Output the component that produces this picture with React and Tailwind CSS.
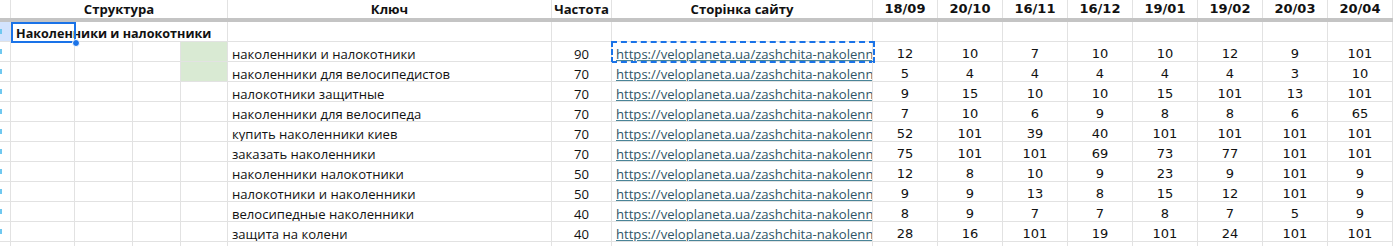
import React from 'react'

const dates = ['18/09', '20/10', '16/11', '16/12', '19/01', '19/02', '20/03', '20/04']

const rows = [
  ['наколенники и налокотники', 90, [12, 10, 7, 10, 10, 12, 9, 101]],
  ['наколенники для велосипедистов', 70, [5, 4, 4, 4, 4, 4, 3, 10]],
  ['налокотники защитные', 70, [9, 15, 10, 10, 15, 101, 13, 101]],
  ['наколенники для велосипеда', 70, [7, 10, 6, 9, 8, 8, 6, 65]],
  ['купить наколенники киев', 70, [52, 101, 39, 40, 101, 101, 101, 101]],
  ['заказать наколенники', 70, [75, 101, 101, 69, 73, 77, 101, 101]],
  ['наколенники налокотники', 50, [12, 8, 10, 9, 23, 9, 101, 9]],
  ['налокотники и наколенники', 50, [9, 9, 13, 8, 15, 12, 101, 9]],
  ['велосипедные наколенники', 40, [8, 9, 7, 7, 8, 7, 5, 9]],
  ['защита на колени', 40, [28, 16, 101, 19, 101, 24, 101, 101]],
]

const url = 'https://veloplaneta.ua/zashchita-nakolenn'

const grid =
  'grid grid-cols-[11px_64px_58px_48px_47px_324px_60px_261px_repeat(8,65px)]'
const cell = 'border-r border-b border-[#e2e2e2] h-5 overflow-hidden whitespace-nowrap'
const txt = 'pt-1 leading-4'
const rounded = { fontFamily: '"Open Sans", "Noto Sans", sans-serif' }
const verdana = { fontFamily: '"DejaVu Sans", Verdana, sans-serif' }

const RowHead = ({ active }) => (
  <div className={`${cell} relative ${active ? 'bg-[#d3e3fd]' : 'bg-white'}`}>
    <span className="absolute left-0 top-[7px] w-[2px] h-[5px] bg-[#6fc8f0]" />
  </div>
)

const App = () => {
  return (
    <div className="w-[1393px] h-[246px] overflow-hidden bg-white text-[13.1px] text-[#111]" style={rounded}>
      {/* header */}
      <div className={`${grid} h-[18px]`}>
        <div className="border-r border-[#e2e2e2]" />
        <div className="col-span-4 border-r border-[#e2e2e2] text-center font-bold leading-[18px] whitespace-nowrap">Структура</div>
        <div className="border-r border-[#e2e2e2] text-center font-bold leading-[18px] whitespace-nowrap">Ключ</div>
        <div className="border-r border-[#e2e2e2] text-center font-bold leading-[18px] whitespace-nowrap overflow-hidden">Частота</div>
        <div className="border-r border-[#e2e2e2] text-center font-bold leading-[18px] whitespace-nowrap">Сторінка сайту</div>
        {dates.map((d) => (
          <div key={d} className="border-r border-[#e2e2e2] text-center font-bold leading-[18px] text-[13px]" style={verdana}>
            {d}
          </div>
        ))}
      </div>
      <div className="h-1 bg-[#c4c4c4]" />

      {/* title row */}
      <div className={`${grid} relative`}>
        <RowHead active />
        <div className={`${cell} col-span-4 pl-[5px] font-bold text-[12.6px] ${txt}`}>Наколенники и налокотники</div>
        <div className={cell} />
        <div className={cell} />
        <div className={cell} />
        {dates.map((d) => (
          <div key={d} className={cell} />
        ))}
        <div className="absolute left-[11px] top-0 w-[65px] h-[21px] border-2 border-[#1a73e8]" />
        <div className="absolute left-[72px] top-[17px] w-2 h-2 rounded-full bg-[#1a73e8] border border-white z-10" />
      </div>

      {/* data rows */}
      {rows.map(([key, freq, vals], i) => (
        <div key={key} className={`${grid} relative`}>
          <RowHead />
          <div className={cell} />
          <div className={cell} />
          <div className={cell} />
          <div className={`${cell} ${i < 2 ? 'bg-[#d9ead3]' : ''}`} />
          <div className={`${cell} pl-1 ${txt}`}>{key}</div>
          <div className={`${cell} text-center ${txt}`}>{freq}</div>
          <div className={`${cell} pl-1 ${txt}`}>
            <span className="text-[#2f5566] underline decoration-[#4a8598] underline-offset-1">{url}</span>
          </div>
          {vals.map((v, j) => (
            <div key={j} className={`${cell} text-center text-[13px] ${txt}`} style={verdana}>
              {v}
            </div>
          ))}
          {i === 0 && (
            <div className="absolute left-[611px] top-[-1px] w-[264px] h-[22px] border-2 border-dashed border-[#1a73e8]" />
          )}
        </div>
      ))}

      <div className={grid}>
        <RowHead />
        {Array.from({ length: 15 }).map((_, k) => (
          <div key={k} className={cell} />
        ))}
      </div>
    </div>
  )
}

export default App
